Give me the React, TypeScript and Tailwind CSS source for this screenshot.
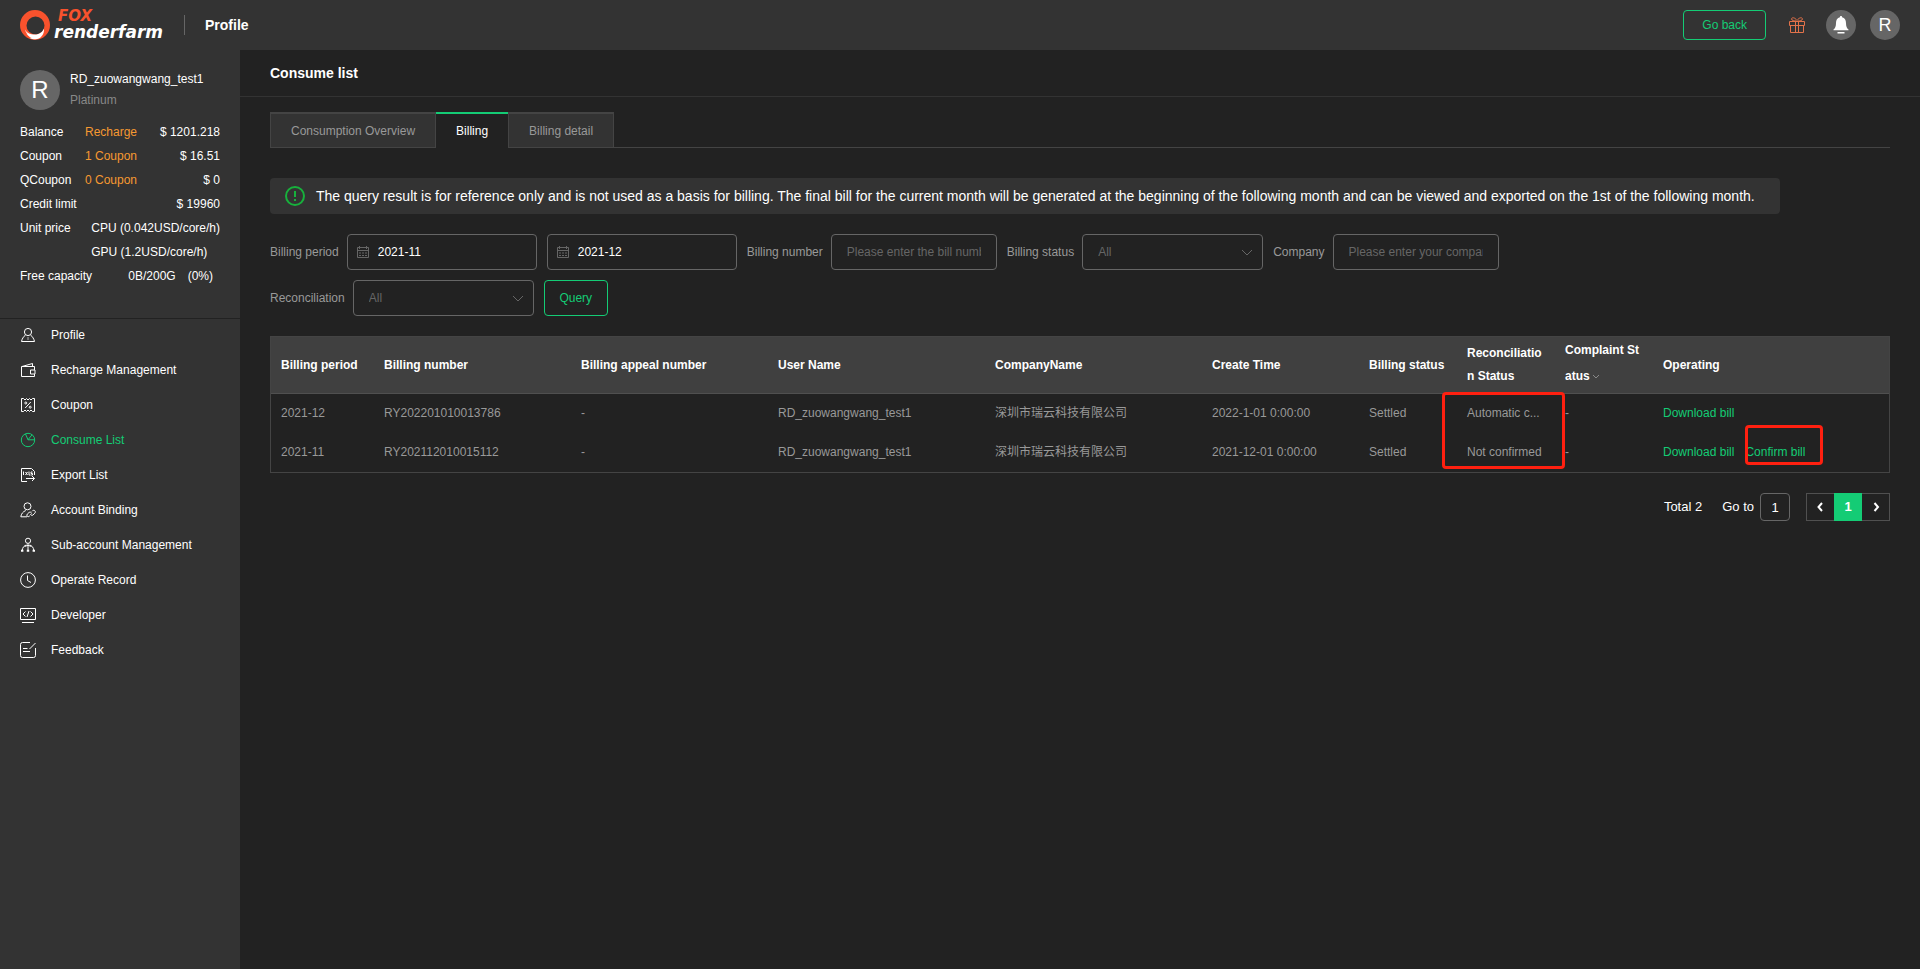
import React, { ReactNode, useState } from 'react'

interface IconProps {
  children: ReactNode
  size?: string
}

const Icon = ({ children, size = 'size-4' }: IconProps) => (
  <svg viewBox="0 0 16 16" className={`${size} shrink-0`} fill="none" stroke="currentColor" strokeWidth="1" aria-hidden="true">
    {children}
  </svg>
)

const navItems: { label: string; icon: ReactNode }[] = [
  {
    label: 'Profile',
    icon: (
      <Icon>
        <circle cx="8" cy="5" r="3.6" />
        <path d="M5.5 8C3.4 9.6 2 12 1.5 14.5h13C14 12 12.600 9.600 10.500 8" />
        <path d="M8 10v3" opacity=".6" />
      </Icon>
    ),
  },
  {
    label: 'Recharge Management',
    icon: (
      <Icon>
        <path d="M14.500 8V4.500H1.500v10h13V12M2 4.500L12.500 1.500v3" />
        <path d="M15 8H10.500v4H15z" />
      </Icon>
    ),
  },
  {
    label: 'Coupon',
    icon: (
      <Icon>
        <path d="M1.500 1.500h2L5 3l1.500-1.500L8 3l1.500-1.500L11 3l1.500-1.500h2v13h-2L11 13l-1.500 1.500L8 13l-1.500 1.500L5 13l-1.500 1.500h-2z" />
        <path d="M10.800 5L5.200 11" />
        <circle cx="5.800" cy="6" r="1" />
        <circle cx="10.200" cy="10.200" r="1" />
      </Icon>
    ),
  },
  {
    label: 'Consume List',
    icon: (
      <Icon>
        <circle cx="8" cy="8" r="6.700" />
        <path d="M5.500 2L8 7.800h6.500M8 7.800l4-5" />
      </Icon>
    ),
  },
  {
    label: 'Export List',
    icon: (
      <Icon>
        <path d="M14.500 8V4.500l-3-3h-10v13h5.500" />
        <path d="M3.500 4.500v3.500M5.500 5l2 3M7.500 5l-2 3M9 4.500V8h1M12.500 5h-1.500v1.500h1.500V8h-2" />
        <path d="M6 11.500h8.500M12 9l2.500 2.500L12 14" />
      </Icon>
    ),
  },
  {
    label: 'Account Binding',
    icon: (
      <Icon>
        <circle cx="7.500" cy="4.300" r="3.500" />
        <path d="M5.800 8.500C3 9.500 1.200 12 .8 14.800H7" />
        <path d="M9.800 13.800l-1 .8c-1.600.4-2.600-1.200-1.500-2.500L9 10.500c1-.8 2.500-.3 2.500 1M12 9.300l.8-.8c1.800-.8 3.400 1 2 2.700L13 13c-1 .8-2.300.3-2.500-1" />
      </Icon>
    ),
  },
  {
    label: 'Sub-account Management',
    icon: (
      <Icon>
        <circle cx="8" cy="3.800" r="2.600" />
        <path d="M8 6.500V13M6.500 8C4 8.500 2.500 10.500 2.200 13.500M9.500 8c2.500.5 4 2.500 4.300 5.500M4.500 9.500L8 8.300l3.500 1.200" />
        <path d="M1 13.700h2.400M6.800 13.700h2.400M12.600 13.700H15" strokeWidth="2" />
      </Icon>
    ),
  },
  {
    label: 'Operate Record',
    icon: (
      <Icon>
        <circle cx="8" cy="8" r="7.400" />
        <path d="M7.500 3.500v5L11 10.500" />
      </Icon>
    ),
  },
  {
    label: 'Developer',
    icon: (
      <Icon>
        <path d="M.5 1.500h15v11H.5zM2 15.500h12" />
        <path d="M5.500 4.500L3 7l2.500 2.500M10.500 4.500L13 7l-2.500 2.500M9 4L7 10" />
      </Icon>
    ),
  },
  {
    label: 'Feedback',
    icon: (
      <Icon>
        <path d="M10 .5H2.500a2 2 0 0 0-2 2v11a2 2 0 0 0 2 2h11a2 2 0 0 0 2-2V6" />
        <path d="M15.500 1L9.500 7M3 6.500h4.500M3 9.500h7" />
      </Icon>
    ),
  },
]

const account = [
  { label: 'Balance', link: 'Recharge', value: '$ 1201.218' },
  { label: 'Coupon', link: '1 Coupon', value: '$ 16.51' },
  { label: 'QCoupon', link: '0 Coupon', value: '$ 0' },
  { label: 'Credit limit', link: '', value: '$ 19960' },
]

const tabs = ['Consumption Overview', 'Billing', 'Billing detail']

const bills = [
  {
    period: '2021-12',
    number: 'RY202201010013786',
    created: '2022-1-01 0:00:00',
    reconciliation: 'Automatic c...',
    canConfirm: false,
  },
  {
    period: '2021-11',
    number: 'RY202112010015112',
    created: '2021-12-01 0:00:00',
    reconciliation: 'Not confirmed',
    canConfirm: true,
  },
]

const fieldClass =
  'h-9 rounded border border-[#666] bg-transparent px-[15px] text-xs text-white outline-none placeholder:text-[#666]'

const Logo = () => (
  <a href="#" className="flex w-[164px] items-center gap-1" aria-label="Fox renderfarm">
    <svg viewBox="0 0 30 30" className="size-[30px] shrink-0" aria-hidden="true">
      <path
        fillRule="evenodd"
        fill="#f8522d"
        d="M15 0a15 15 0 1 1 0 30a15 15 0 0 1 0-30zM15.500 6.500a9 9 0 1 0 0 18a9 9 0 0 0 0-18z"
      />
      <path
        fill="#fff"
        d="M5 19.500c2 4 5.500 5 10 5c4.500 0 7.500-2.500 9-6c.5 6-3.500 11-9 10.800c-2 0-4-.6-5.500-1.600l2 .2c-2.500-1.200-4.300-2.700-5.300-4.600l2 1.400c-1.700-1.500-2.800-3-3.200-5.200z"
      />
    </svg>
    <span className="flex flex-col font-['DejaVu_Sans',sans-serif] font-bold italic">
      <span className="pl-1 text-[15px] leading-[15px] text-[#f8522d]">FOX</span>
      <span className="text-[17px] leading-[17px] text-white">renderfarm</span>
    </span>
  </a>
)

const Chevron = () => (
  <svg viewBox="0 0 12 8" className="pointer-events-none absolute right-[10px] top-[15px] h-2 w-3" fill="none" stroke="#666" aria-hidden="true">
    <path d="M1 1l5 5 5-5" />
  </svg>
)

const Header = () => (
  <header className="flex h-[50px] items-center bg-[#333] px-5">
    <Logo />
    <h1 className="border-l border-[#666] pl-5 text-sm font-bold">Profile</h1>
    <div className="ml-auto flex items-center">
      <button className="h-[30px] rounded border border-[#14cc75] px-[18px] text-xs text-[#14cc75]">Go back</button>
      <button className="ml-[22px] text-[#e2724a]" aria-label="Gifts">
        <svg viewBox="0 0 18 18" className="size-[18px]" fill="none" stroke="currentColor" aria-hidden="true">
          <path d="M1.500 5.500h15v4h-15zM2.500 9.500v7h13v-7M7.500 5.500v11M10.500 5.500v11" />
          <path d="M8 5C6.500 5 3.500 4.500 3.500 3S6.500.8 9 4.500C11.500.8 14.500 1.500 14.500 3S11.500 5 10 5" />
        </svg>
      </button>
      <button className="ml-5 grid size-[30px] place-items-center rounded-full bg-[#666]" aria-label="Notifications">
        <svg viewBox="0 0 16 18" className="h-[18px] w-4" fill="#fff" aria-hidden="true">
          <path d="M8 0c.7 0 1.100.5 1.100 1.300C11.800 2 13 4.200 13 7c0 3.500.8 5.200 2.500 6.500v.8H.5v-.8C2.200 12.200 3 10.500 3 7c0-2.800 1.200-5 3.900-5.700C6.900.5 7.300 0 8 0zM4.500 16h7v1.500h-7z" />
        </svg>
      </button>
      <button className="ml-[14px] size-[30px] rounded-full bg-[#666] text-lg leading-[30px]">R</button>
    </div>
  </header>
)

const Sidebar = () => (
  <aside className="w-60 shrink-0 bg-[#333] text-xs">
    <div className="h-[269px] border-b border-[#222] px-5 pt-5">
      <div className="flex h-10 items-center gap-[10px]">
        <span className="grid size-10 shrink-0 place-items-center rounded-full bg-[#666] text-2xl">R</span>
        <div className="leading-[21px]">
          <p>RD_zuowangwang_test1</p>
          <p className="text-[#888]">Platinum</p>
        </div>
      </div>
      <dl className="mt-[10px] leading-6">
        {account.map((row) => (
          <div key={row.label} className="flex">
            <dt className="w-[65px]">{row.label}</dt>
            <dd className="flex flex-1 justify-between">
              <a href="#" className="text-[#f69931]">{row.link}</a>
              <span>{row.value}</span>
            </dd>
          </div>
        ))}
        <div className="flex justify-between">
          <dt>Unit price</dt>
          <dd>
            <p>CPU (0.042USD/core/h)</p>
            <p>GPU (1.2USD/core/h)</p>
          </dd>
        </div>
        <div className="flex justify-between">
          <dt>Free capacity</dt>
          <dd className="flex gap-3 pr-[7px]">
            <span>0B/200G</span>
            <span>(0%)</span>
          </dd>
        </div>
      </dl>
    </div>
    <nav>
      {navItems.map(({ label, icon }) => (
        <a
          key={label}
          href="#"
          className={`flex h-[35px] items-center gap-[15px] px-5 pb-[3px] ${label === 'Consume List' ? 'text-[#14cc75]' : 'text-white'}`}
        >
          {icon}
          {label}
        </a>
      ))}
    </nav>
  </aside>
)

const MonthField = ({ id, label, value }: { id: string; label: string; value: string }) => (
  <div className="relative">
    <svg viewBox="0 0 14 14" className="absolute left-[9px] top-[11px] size-[14px]" fill="none" stroke="#666" aria-hidden="true">
      <path d="M1.500 2.500h11v10h-11zM1.500 5.500h11M3.500 1v3M10.500 1v3" />
      <path d="M3 8h8M3 10.500h8" strokeDasharray="2 1" />
    </svg>
    <input id={id} aria-label={label} defaultValue={value} className={`${fieldClass} w-[190px] pl-[30px]`} />
  </div>
)

const SelectField = ({ id, label }: { id: string; label: string }) => (
  <div className="flex items-center gap-2">
    <label htmlFor={id}>{label}</label>
    <div className="relative">
      <select id={id} className="h-9 w-[181px] appearance-none rounded border border-[#666] bg-[#222] px-[15px] text-xs text-[#666] outline-none">
        <option>All</option>
      </select>
      <Chevron />
    </div>
  </div>
)

const TextField = ({ id, label, placeholder }: { id: string; label: string; placeholder: string }) => (
  <div className="flex items-center gap-2">
    <label htmlFor={id}>{label}</label>
    <input id={id} placeholder={placeholder} className={`${fieldClass} w-[166px]`} />
  </div>
)

const Filters = () => (
  <form className="mt-5 flex flex-col gap-[10px] text-xs text-[#999]" onSubmit={(e) => e.preventDefault()}>
    <div className="flex items-center gap-[10px]">
      <div className="flex items-center gap-2">
        <label htmlFor="from">Billing period</label>
        <MonthField id="from" label="Billing period from" value="2021-11" />
      </div>
      <MonthField id="to" label="Billing period to" value="2021-12" />
      <TextField id="number" label="Billing number" placeholder="Please enter the bill number" />
      <SelectField id="status" label="Billing status" />
      <TextField id="company" label="Company" placeholder="Please enter your company name" />
    </div>
    <div className="flex items-center gap-[10px]">
      <SelectField id="reconciliation" label="Reconciliation" />
      <button className="h-9 w-16 rounded border border-[#14cc75] text-[#14cc75]">Query</button>
    </div>
  </form>
)

const BillTable = () => (
  <table className="mt-5 w-full table-fixed border-separate border-spacing-0 border border-[#444] text-left text-xs">
    <colgroup>
      <col className="w-[103px]" />
      <col className="w-[197px]" />
      <col className="w-[197px]" />
      <col className="w-[217px]" />
      <col className="w-[217px]" />
      <col className="w-[157px]" />
      <col className="w-[98px]" />
      <col className="w-[98px]" />
      <col className="w-[98px]" />
      <col />
    </colgroup>
    <thead className="bg-[#404040] leading-[23px]">
      <tr className="h-[57px] *:border-b *:border-[#505050] *:px-[10px]">
        <th>Billing period</th>
        <th>Billing number</th>
        <th>Billing appeal number</th>
        <th>User Name</th>
        <th>CompanyName</th>
        <th>Create Time</th>
        <th>Billing status</th>
        <th className="break-all">Reconciliation Status</th>
        <th className="break-all pb-1 leading-[26px]">
          Complaint Status
          <svg viewBox="0 0 8 6" className="ml-[2px] inline h-[6px] w-2" fill="none" stroke="#888" aria-hidden="true">
            <path d="M1 1l3 3 3-3" />
          </svg>
        </th>
        <th>Operating</th>
      </tr>
    </thead>
    <tbody className="text-[#999]">
      {bills.map((bill, i) => (
        <tr key={bill.number} className="h-[39px] *:px-[10px] *:pb-[2px]">
          <td>{bill.period}</td>
          <td>{bill.number}</td>
          <td>-</td>
          <td>RD_zuowangwang_test1</td>
          <td>深圳市瑞云科技有限公司</td>
          <td>{bill.created}</td>
          <td>Settled</td>
          <td className="relative">
            {bill.reconciliation}
            {/* frame round both reconciliation states */}
            {i === 0 && (
              <span className="pointer-events-none absolute -left-[15px] -top-[2px] z-10 h-[77px] w-[123px] rounded border-3 border-[#ff2010]" />
            )}
          </td>
          <td>-</td>
          <td>
            <a href="#" className="text-[#14cc75]">Download bill</a>
            {bill.canConfirm && (
              <a href="#" className="relative ml-[11px] text-[#14cc75]">
                Confirm bill
                <span className="pointer-events-none absolute left-0 -top-5 h-10 w-[78px] rounded border-3 border-[#ff2010]" />
              </a>
            )}
          </td>
        </tr>
      ))}
    </tbody>
  </table>
)

const Pagination = () => (
  <div className="mt-5 flex h-7 items-center justify-end text-[13px]">
    <span>Total 2</span>
    <label htmlFor="page" className="ml-5">Go to</label>
    <input id="page" defaultValue="1" className="ml-[6px] h-7 w-[30px] rounded border border-[#666] bg-transparent text-center outline-none" />
    <div className="ml-4 flex h-7 *:grid *:w-7 *:place-items-center">
      <button className="border border-r-0 border-[#505050]" aria-label="Previous page">
        <svg viewBox="0 0 10 10" className="size-[10px]" fill="none" stroke="#fff" strokeWidth="2" aria-hidden="true">
          <path d="M6 1L2.500 5L6 9" />
        </svg>
      </button>
      <button className="bg-[#14cc75] font-bold">1</button>
      <button className="border border-l-0 border-[#505050]" aria-label="Next page">
        <svg viewBox="0 0 10 10" className="size-[10px]" fill="none" stroke="#fff" strokeWidth="2" aria-hidden="true">
          <path d="M3.500 1L7 5L3.500 9" />
        </svg>
      </button>
    </div>
  </div>
)

export default function App() {
  const [activeTab, setActiveTab] = useState('Billing')

  return (
    <div className="flex min-h-screen flex-col bg-[#222] font-['Liberation_Sans','Noto_Sans_CJK_SC',sans-serif] text-white">
      <Header />
      <div className="flex flex-1">
        <Sidebar />
        <main className="min-w-0 flex-1">
          <h2 className="h-[47px] border-b border-[#333] px-[30px] text-sm font-bold leading-[46px]">Consume list</h2>
          <div className="px-[30px] pt-[15px]">
            <div className="flex h-9 text-xs" role="tablist">
              {tabs.map((tab) => (
                <button
                  key={tab}
                  role="tab"
                  aria-selected={tab === activeTab}
                  onClick={() => setActiveTab(tab)}
                  className={
                    tab === activeTab
                      ? 'border-t-2 border-[#14cc75] px-5'
                      : 'border border-t-2 border-[#444] bg-[#333] px-5 text-[#999]'
                  }
                >
                  {tab}
                </button>
              ))}
              <span className="flex-1 border-b border-[#444]" />
            </div>

            <div className="mt-[30px] flex h-9 w-fit items-center gap-[11px] rounded bg-[#333] pl-[15px] pr-[25px] text-sm">
              <svg viewBox="0 0 20 20" className="size-5 shrink-0" fill="none" stroke="#17b13c" strokeWidth="2" aria-hidden="true">
                <circle cx="10" cy="10" r="9" />
                <path d="M10 5v6M10 13v2" />
              </svg>
              <p>
                The query result is for reference only and is not used as a basis for billing. The final bill for the current month will be
                generated at the beginning of the following month and can be viewed and exported on the 1st of the following month.
              </p>
            </div>

            <Filters />
            <BillTable />
            <Pagination />
          </div>
        </main>
      </div>
    </div>
  )
}
